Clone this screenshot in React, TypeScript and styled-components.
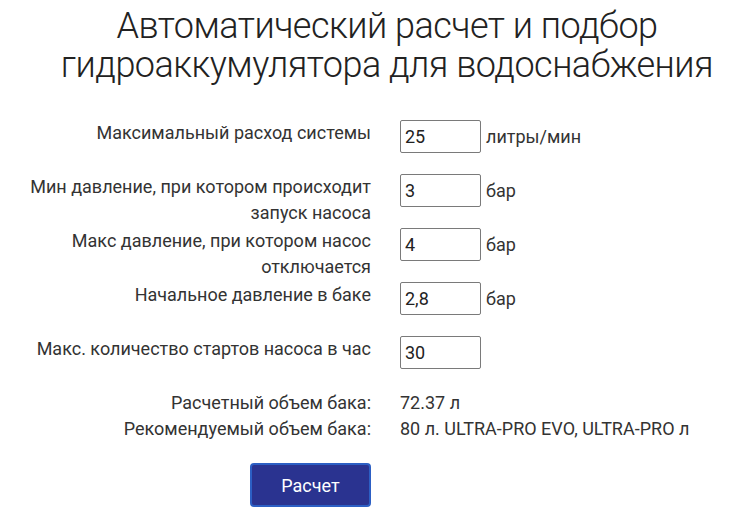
import React from 'react';
import styled, { createGlobalStyle } from 'styled-components';

const GlobalStyle = createGlobalStyle`
  body {
    margin: 0;
    background: #fff;
    font-family: Roboto, "Liberation Sans", sans-serif;
    color: #333;
  }
`;

const Page = styled.div`
  width: 742px;
  padding-top: 7px;
`;

const Title = styled.h1`
  margin: 0 0 35px;
  padding-left: 32px;
  font-weight: 300;
  font-size: 36px;
  letter-spacing: -0.5px;
  line-height: 39px;
  color: #222;
  text-align: center;
`;

const Form = styled.div`
  display: grid;
  grid-template-columns: 360px 81px auto;
  column-gap: 29px;
  padding-left: 11px;
`;

const Label = styled.div`
  text-align: right;
  font-size: 18px;
  line-height: 26px;
  color: #333;
`;

const Field = styled.input`
  box-sizing: border-box;
  width: 81px;
  height: 33px;
  margin-bottom: 21px;
  padding: 0 4px;
  border: 1px solid #7a7a7a;
  border-radius: 2px;
  font-family: Roboto, "Liberation Sans", sans-serif;
  font-size: 18px;
  color: #222;
`;

const Unit = styled.div`
  margin-left: -24px;
  font-size: 18px;
  line-height: 33px;
  color: #333;
`;

const Result = styled.div`
  grid-column: 2 / span 2;
  font-size: 18px;
  line-height: 26px;
  color: #333;
  white-space: nowrap;
`;

const ButtonCell = styled.div`
  display: flex;
  justify-content: flex-end;
  padding-top: 21px;
`;

const Button = styled.button`
  width: 121px;
  height: 44px;
  background: #2a3390;
  border: 2px solid #2c5fc4;
  border-radius: 4px;
  color: #fff;
  font-family: Roboto, "Liberation Sans", sans-serif;
  font-size: 18px;
`;

const rows = [
  { label: 'Максимальный расход системы', value: '25', unit: 'литры/мин' },
  { label: 'Мин давление, при котором происходит запуск насоса', value: '3', unit: 'бар' },
  { label: 'Макс давление, при котором насос отключается', value: '4', unit: 'бар' },
  { label: 'Начальное давление в баке', value: '2,8', unit: 'бар' },
  { label: 'Макс. количество стартов насоса в час', value: '30', unit: '' },
];

export default function App() {
  return (
    <Page>
      <GlobalStyle />
      <Title>
        Автоматический расчет и подбор
        <br />
        гидроаккумулятора для водоснабжения
      </Title>
      <Form>
        {rows.map(r => (
          <React.Fragment key={r.label}>
            <Label>{r.label}</Label>
            <Field defaultValue={r.value} />
            <Unit>{r.unit}</Unit>
          </React.Fragment>
        ))}
        <Label>Расчетный объем бака:</Label>
        <Result>72.37 л</Result>
        <Label>Рекомендуемый объем бака:</Label>
        <Result>80 л. ULTRA-PRO EVO, ULTRA-PRO л</Result>
        <ButtonCell>
          <Button>Расчет</Button>
        </ButtonCell>
      </Form>
    </Page>
  );
}
